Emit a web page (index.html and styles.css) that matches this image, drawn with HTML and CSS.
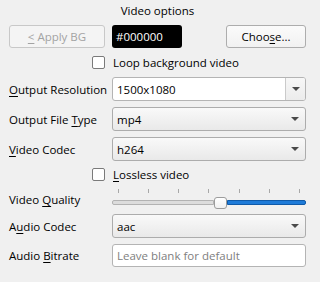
FILE: index.html
```html
<!DOCTYPE html>
<html>
<head>
<meta charset="utf-8">
<link rel="stylesheet" href="styles.css">
</head>
<body>
<div class="panel">
  <div class="title">Video options</div>
  <div class="btnrow">
    <div class="btn disabled"><span><u>&lt;</u> Apply BG</span></div>
    <div class="colorbox">#000000</div>
    <div class="spacer"></div>
    <div class="btn choose"><span>Choo<u>s</u>e...</span></div>
  </div>
  <div class="checkrow r-loop"><span class="box"></span><span>Loop background video</span></div>
  <div class="row r-res">
    <div class="label"><span><u>O</u>utput Resolution</span></div>
    <div class="combo editable"><span class="val">1500x1080</span><span class="arrowbtn"><span class="arrow"></span></span></div>
  </div>
  <div class="row r-gap6">
    <div class="label"><span>Output File <u>T</u>ype</span></div>
    <div class="combo"><span class="val">mp4</span><span class="arrow"></span></div>
  </div>
  <div class="row r-gap6">
    <div class="label"><span><u>V</u>ideo Codec</span></div>
    <div class="combo"><span class="val">h264</span><span class="arrow"></span></div>
  </div>
  <div class="checkrow r-lossless"><span class="box"></span><span><u>L</u>ossless video</span></div>
  <div class="row r-quality">
    <div class="label"><span>Video <u>Q</u>uality</span></div>
    <div class="slider">
      <div class="ticks"><i></i><i></i><i></i><i></i><i></i><i></i><i></i></div>
      <div class="groove">
        <div class="sub"></div>
        <div class="handle"></div>
        <div class="add"></div>
      </div>
    </div>
  </div>
  <div class="row r-audio">
    <div class="label"><span>A<u>u</u>dio Codec</span></div>
    <div class="combo"><span class="val">aac</span><span class="arrow"></span></div>
  </div>
  <div class="row r-gap6 r-h23">
    <div class="label"><span>Audio <u>B</u>itrate</span></div>
    <div class="lineedit">Leave blank for default</div>
  </div>
</div>
</body>
</html>
```

FILE: styles.css
```css
html, body {
  margin: 0;
  padding: 0;
  background: #f0f0f0;
}
body {
  font-family: "Open Sans", "Noto Sans", sans-serif;
  font-size: 11.5px;
  color: #000;
  width: 315px;
  height: 282px;
  overflow: hidden;
}
u {
  text-decoration: underline;
  text-underline-offset: 2px;
}
.panel {
  display: flex;
  flex-direction: column;
  padding: 0 9px;
}
.title {
  height: 22px;
  line-height: 22px;
  text-align: center;
}
.btnrow {
  margin-top: 3px;
  height: 23px;
  display: flex;
  align-items: stretch;
}
.btn {
  box-sizing: border-box;
  border: 1px solid #adadad;
  border-radius: 3px;
  background: linear-gradient(#fbfbfb, #f1f1f1);
  display: flex;
  align-items: center;
  justify-content: center;
}
.btn.disabled {
  width: 96px;
  color: #a3a3a3;
  border-color: #c8c8c8;
  background: #f4f4f4;
}
.btn.choose {
  width: 80px;
}
.colorbox {
  margin-left: 7px;
  width: 70px;
  background: #000;
  color: #fff;
  border-radius: 3px;
  padding-left: 4px;
  box-sizing: border-box;
  display: flex;
  align-items: center;
}
.spacer {
  flex: 1;
}
.checkrow {
  display: flex;
  align-items: center;
  padding-left: 83px;
  gap: 8px;
}
.r-loop {
  margin-top: 4px;
  height: 21px;
}
.r-lossless {
  margin-top: 3px;
  height: 20px;
}
.box {
  width: 13px;
  height: 13px;
  box-sizing: border-box;
  border: 1px solid #7a7a7a;
  border-radius: 2px;
  background: #fff;
}
.row {
  display: grid;
  grid-template-columns: 103px 1fr;
  align-items: stretch;
  height: 24px;
}
.r-res {
  margin-top: 4px;
}
.r-gap6 {
  margin-top: 6px;
}
.r-h23 {
  height: 23px;
}
.r-quality {
  margin-top: 3px;
}
.r-audio {
  margin-top: 3px;
}
.label {
  display: flex;
  align-items: center;
}
.combo {
  box-sizing: border-box;
  border: 1px solid #acacac;
  border-radius: 3px;
  background: linear-gradient(#f9f9f9, #e9e9e9);
  display: flex;
  align-items: center;
  padding-left: 4px;
}
.combo .val {
  flex: 1;
}
.combo.editable {
  background: #fff;
  border-color: #b4b4b4;
  align-items: stretch;
}
.combo.editable .val {
  display: flex;
  align-items: center;
}
.arrowbtn {
  width: 19px;
  border-left: 1px solid #cacaca;
  background: linear-gradient(#f7f7f7, #ececec);
  border-radius: 0 2px 2px 0;
  display: flex;
  align-items: center;
  justify-content: center;
}
.arrow {
  width: 0;
  height: 0;
  border-left: 4px solid transparent;
  border-right: 4px solid transparent;
  border-top: 4px solid #4a4a4a;
  margin-right: 6px;
}
.arrowbtn .arrow {
  margin-right: 0;
}
.slider {
  display: flex;
  flex-direction: column;
}
.ticks {
  height: 4px;
  margin-top: 2px;
  padding: 0 6px 0 6px;
  display: flex;
  justify-content: space-between;
}
.ticks i {
  width: 1px;
  height: 4px;
  background: #a8a8a8;
}
.groove {
  margin-top: 7px;
  height: 5px;
  display: flex;
  align-items: center;
}
.sub {
  width: 102px;
  height: 5px;
  box-sizing: border-box;
  background: #dcdcdc;
  border: 1px solid #b2b2b2;
  border-radius: 2px 0 0 2px;
}
.add {
  flex: 1;
  height: 5px;
  box-sizing: border-box;
  background: #1e7bd8;
  border: 1px solid #0f5aa8;
  border-radius: 0 2px 2px 0;
}
.handle {
  width: 13px;
  height: 12px;
  box-sizing: border-box;
  background: linear-gradient(#ffffff, #f0f0f0);
  border: 1px solid #9c9c9c;
  border-radius: 3px;
  flex: none;
}
.lineedit {
  box-sizing: border-box;
  border: 1px solid #b4b4b4;
  border-radius: 3px;
  background: #fff;
  color: #808080;
  display: flex;
  align-items: center;
  padding-left: 4px;
}
```
